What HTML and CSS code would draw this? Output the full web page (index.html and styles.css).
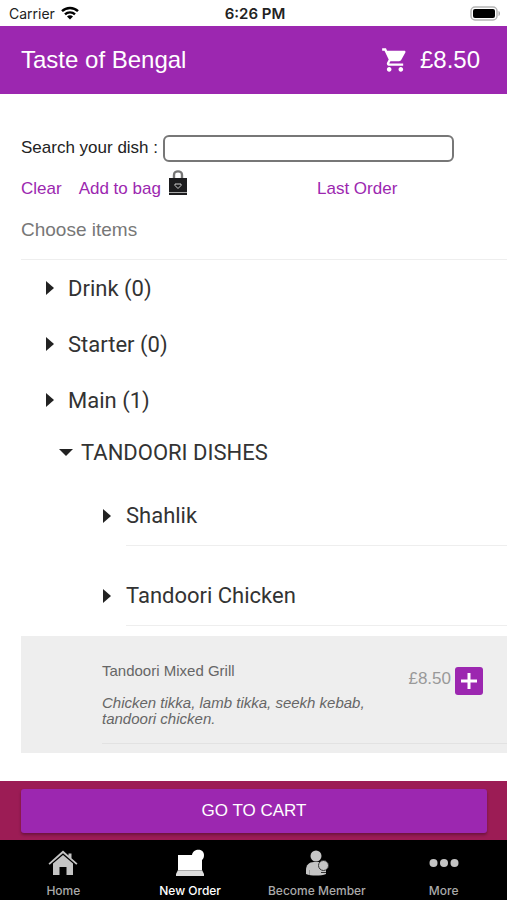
FILE: index.html
```html
<!DOCTYPE html>
<html lang="en">
<head>
  <meta charset="UTF-8">
  <meta name="viewport" content="width=device-width, initial-scale=1.0">
  <title>Taste of Bengal</title>
  <link rel="stylesheet" href="styles.css">
</head>
<body>

  <div class="status">
    <div class="carrier">
      <span>Carrier</span>
      <svg width="18" height="14" viewBox="0 0 18 14" fill="none" stroke="#000" stroke-width="2.4">
        <path d="M1 5.2C5.4 .9 12.6 .9 17 5.2"/>
        <path d="M4 8.3C6.7 5.7 11.3 5.7 14 8.3"/>
        <path d="M9 13.5L6 10.4C7.7 8.9 10.3 8.9 12 10.4Z" fill="#000" stroke="none"/>
      </svg>
    </div>
    <span class="time">6:26 PM</span>
    <div class="battery">
      <svg width="31" height="15" viewBox="0 0 31 15">
        <rect x="1" y="1" width="26" height="13" rx="4" fill="#fff" stroke="#b5b5b5" stroke-width="1.5"/>
        <rect x="3" y="3" width="22" height="9" rx="2" fill="#000"/>
        <path d="M28.5 5v5c2-.5 2-4.500 0-5z" fill="#aaa"/>
      </svg>
    </div>
  </div>

  <header class="header">
    <h1>Taste of Bengal</h1>
    <a href="#" class="basket">
      <svg width="28" height="28" viewBox="0 0 24 24" fill="#fff">
        <path d="M7 18c-1.1 0-1.99.9-1.99 2S5.9 22 7 22s2-.9 2-2-.9-2-2-2zM1 2v2h2l3.6 7.59-1.35 2.45c-.16.28-.25.61-.25.96 0 1.1.9 2 2 2h12v-2H7.42c-.14 0-.25-.11-.25-.25l.03-.12.9-1.63h7.45c.75 0 1.41-.41 1.75-1.03l3.58-6.49c.08-.14.12-.31.12-.48 0-.55-.45-1-1-1H5.21l-.94-2H1zm16 16c-1.1 0-1.99.9-1.99 2s.89 2 1.99 2 2-.9 2-2-.9-2-2-2z"/>
      </svg>
      <span>£8.50</span>
    </a>
  </header>

  <main class="content">
    <div class="search">
      <label for="dish">Search your dish :</label>
      <input type="text" id="dish">
    </div>

    <div class="links">
      <div class="links-left">
        <a href="#">Clear</a>
        <a href="#" class="add">
          <span>Add to bag</span>
          <svg width="20" height="26" viewBox="0 0 20 26">
            <path d="M6 10V5c0-4.800 8-4.800 8 0v5" fill="none" stroke="#777" stroke-width="2.4"/>
            <path d="M1 8h18v17H1z" fill="#1c1c1e"/>
            <path d="M1 22.500h18" stroke="#aaa"/>
            <path d="M10 18.500L7 15.500V14h6v1.500z" fill="none" stroke="#ccc"/>
          </svg>
        </a>
      </div>
      <a href="#">Last Order</a>
    </div>

    <h2 class="choose">Choose items</h2>

    <!-- menu tree -->

    <div class="menu">
      <button type="button" class="category"><i class="arrow"></i>Drink (0)</button>
      <button type="button" class="category"><i class="arrow"></i>Starter (0)</button>
      <button type="button" class="category"><i class="arrow"></i>Main (1)</button>
      <button type="button" class="group"><i class="arrow open"></i>TANDOORI DISHES</button>
      <div class="dishes">
        <button type="button" class="dish"><i class="arrow"></i><span>Shahlik</span></button>
        <button type="button" class="dish"><i class="arrow"></i><span>Tandoori Chicken</span></button>
      </div>
    </div>

    <div class="item">
      <div class="item-row">
        <div class="item-text">
          <h3>Tandoori Mixed Grill</h3>
          <p>Chicken tikka, lamb tikka, seekh kebab, tandoori chicken.</p>
        </div>
        <div class="item-price">
          <span>£8.50</span>
          <button type="button" class="plus" aria-label="Add">
            <svg width="16" height="16" viewBox="0 0 16 16" stroke="#fff" stroke-width="3">
              <path d="M8 0v16M0 8h16"/>
            </svg>
          </button>
        </div>
      </div>
    </div>
  </main>

  <div class="checkout">
    <button type="button">GO TO CART</button>
  </div>

  <nav class="tabs">
    <a href="#">
      <svg width="30" height="28" viewBox="0 0 30 28" fill="#c4c4c4">
        <path d="M.5 14.500L15 1.500l5.500 5V4.500H23.500v4.800L29.500 14.500l-1.200 1.200L15 4.200 1.700 15.700z"/>
        <path d="M5 14.500L15 6l10 8.500V26h-6.500v-8h-7v8H5z"/>
      </svg>
      <span>Home</span>
    </a>
    <a href="#" class="active">
      <svg width="30" height="28" viewBox="0 0 30 28" fill="#fff">
        <path d="M3 6h14c1-7 12-7 12 0 0 3-1 4-2 5v10H3z"/>
        <path d="M3 21h24l2 4v2H1v-2z" fill="#ddd"/>
        <path d="M3 21.500h24" stroke="#aaa"/>
      </svg>
      <span>New Order</span>
    </a>
    <a href="#">
      <svg width="30" height="28" viewBox="0 0 30 28" fill="#c4c4c4">
        <circle cx="14" cy="7" r="5.500"/>
        <path d="M4 25v-4c0-5 3-8 8-8h4c5 0 8 3 8 8v4c-5 2-15 2-20 0z"/>
        <path d="M7.500 21v5" stroke="#999"/>
        <circle cx="21.500" cy="16.500" r="5" stroke="#333"/>
        <path d="M19 23.500h5" stroke="#333"/>
      </svg>
      <span>Become Member</span>
    </a>
    <a href="#">
      <svg width="30" height="28" viewBox="0 0 30 28" fill="#c4c4c4">
        <circle cx="4.500" cy="14" r="4"/>
        <circle cx="15" cy="14" r="4"/>
        <circle cx="25.500" cy="14" r="4"/>
      </svg>
      <span>More</span>
    </a>
  </nav>

</body>
</html>
```
FILE: styles.css
```css
*{
margin: 0;
padding: 0;
box-sizing: border-box;
}

body{
display: flex;
flex-direction: column;
min-height: 100vh;
background: #fff;
font-family: 'Liberation Sans', Arial, sans-serif;
color: #222;
}

a{
color: #9c27b0;
text-decoration: none;
}

button{
border: 0;
background: none;
font-family: inherit;
color: inherit;
}

svg{
display: block;
flex: none;
}

/* status bar */
.status{
display: grid;
grid-template-columns: 1fr auto 1fr;
align-items: center;
height: 26px;
padding: 0 6px 0 9px;
font-family: Inter, sans-serif;
font-size: 14px;
}

.carrier{
display: flex;
align-items: center;
gap: 6px;
}

.time{
font-size: 15px;
font-weight: 600;
}

.battery{
justify-self: end;
}

.header{
display: flex;
align-items: center;
justify-content: space-between;
height: 68px;
padding: 0 27px 0 21px;
background: #9c27b0;
color: #fff;
}

.header h1{
font-size: 24px;
font-weight: 400;
}

.basket{
display: flex;
align-items: center;
gap: 11px;
font-size: 24px;
color: #fff;
}

.content{
flex: 1;
padding: 41px 0 28px 21px;
}

.search{
display: flex;
align-items: center;
gap: 5px;
padding-right: 53px;
font-size: 17px;
}

.search label{
white-space: nowrap;
line-height: 24px;
padding-bottom: 2px;
}

.search input{
flex: 1;
min-width: 0;
height: 27px;
padding: 0 8px;
border: 2px solid #777;
border-radius: 6px;
font-size: 16px;
}

.links{
display: grid;
grid-template-columns: 296px 1fr;
align-items: center;
height: 53px;
font-size: 17px;
}

.links-left{
display: flex;
align-items: center;
gap: 17px;
}

.add{
display: flex;
align-items: center;
gap: 7px;
}

.add svg{
margin-bottom: 12px;
}

.choose{
height: 45px;
padding-top: 3px;
border-bottom: 1px solid #eee;
font-size: 19px;
line-height: 24px;
font-weight: 400;
color: #777;
}

/* menu tree */
.menu{
font-family: Roboto, sans-serif;
font-size: 22px;
color: #333;
}

.menu button{
display: flex;
align-items: center;
width: 100%;
font-size: 22px;
text-align: left;
}

.arrow{
flex: none;
border-left: 8px solid #222;
border-top: 7px solid transparent;
border-bottom: 7px solid transparent;
}

.arrow.open{
border-top: 7px solid #222;
border-left: 7px solid transparent;
border-right: 7px solid transparent;
border-bottom: 0;
}

.menu .category{
height: 56px;
padding-left: 25px;
gap: 14px;
}

.menu .group{
height: 48px;
padding-left: 38px;
gap: 8px;
}

.dishes{
display: grid;
gap: 20px;
padding: 10px 0 10px 82px;
}

.menu .dish{
height: 60px;
gap: 15px;
}

.dish span{
flex: 1;
line-height: 59px;
border-bottom: 1px solid #eee;
}

.item{
padding: 25px 0 9px 81px;
background: #eee;
color: #666;
}

.item-row{
display: flex;
justify-content: space-between;
padding: 0 24px 16px 0;
border-bottom: 1px solid #e2e2e2;
}

.item-text{
max-width: 280px;
}

.item h3{
margin-bottom: 14px;
font-size: 15px;
font-weight: 400;
line-height: 20px;
}

.item p{
font-size: 15px;
font-style: italic;
line-height: 16px;
}

.item-price{
display: flex;
align-items: flex-start;
gap: 4px;
padding-top: 6px;
font-size: 17px;
line-height: 24px;
color: #999;
}

.plus{
display: grid;
place-items: center;
width: 28px;
height: 28px;
border-radius: 3px;
background: #9c27b0;
}

.checkout{
padding: 8px 20px 7px 21px;
background: #9c1c55;
}

.checkout button{
display: block;
width: 100%;
height: 44px;
border-radius: 3px;
background: #9c27b0;
box-shadow: 0 2px 3px rgba(0, 0, 0, 0.3);
font-size: 17px;
color: #fff;
}

.tabs{
display: grid;
grid-template-columns: repeat(4, 1fr);
height: 60px;
background: #000;
}

.tabs a{
display: flex;
flex-direction: column;
align-items: center;
gap: 5px;
padding-top: 9px;
font-family: Inter, sans-serif;
font-size: 12px;
font-weight: 500;
line-height: 18px;
color: #aaa;
white-space: nowrap;
}

.tabs .active{
color: #fff;
}
```
